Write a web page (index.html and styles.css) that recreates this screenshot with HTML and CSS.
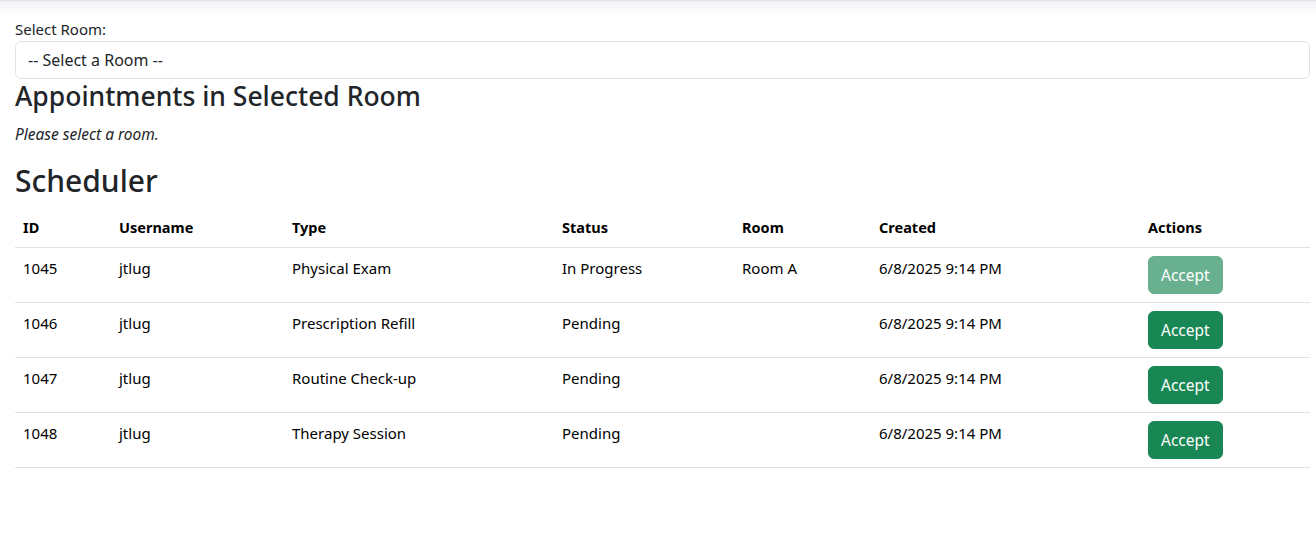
FILE: index.html
```html
<!DOCTYPE html>
<html lang="en">
<head>
<meta charset="utf-8">
<title>Scheduler</title>
<link rel="stylesheet" href="styles.css">
</head>
<body>
<div class="topbar"></div>
<main class="page">
  <label class="form-label" for="room">Select Room:</label>
  <div class="form-select" id="room">-- Select a Room --</div>
  <h3 class="h3">Appointments in Selected Room</h3>
  <p class="note">Please select a room.</p>
  <h2 class="h2">Scheduler</h2>
  <table class="table">
    <colgroup>
      <col class="c-id"><col class="c-user"><col class="c-type"><col class="c-status"><col class="c-room"><col class="c-created"><col class="c-actions">
    </colgroup>
    <thead>
      <tr><th>ID</th><th>Username</th><th>Type</th><th>Status</th><th>Room</th><th>Created</th><th>Actions</th></tr>
    </thead>
    <tbody>
      <tr><td>1045</td><td>jtlug</td><td>Physical Exam</td><td>In Progress</td><td>Room A</td><td>6/8/2025 9:14 PM</td><td><button class="btn disabled" disabled>Accept</button></td></tr>
      <tr><td>1046</td><td>jtlug</td><td>Prescription Refill</td><td>Pending</td><td></td><td>6/8/2025 9:14 PM</td><td><button class="btn">Accept</button></td></tr>
      <tr><td>1047</td><td>jtlug</td><td>Routine Check-up</td><td>Pending</td><td></td><td>6/8/2025 9:14 PM</td><td><button class="btn">Accept</button></td></tr>
      <tr><td>1048</td><td>jtlug</td><td>Therapy Session</td><td>Pending</td><td></td><td>6/8/2025 9:14 PM</td><td><button class="btn">Accept</button></td></tr>
    </tbody>
  </table>
</main>
</body>
</html>
```
FILE: styles.css
```css
* { box-sizing: border-box; }
html, body { margin: 0; padding: 0; }
body {
  font-family: "Noto Sans", "Open Sans", sans-serif;
  font-size: 15px;
  line-height: 24px;
  color: #212529;
  background: #fff;
}
.topbar {
  height: 17px;
  background: linear-gradient(to bottom, #dcdee3 0px, #f1f2f4 2px, #ffffff 16px);
}
.page {
  padding: 0 6px 0 15px;
}
.form-label {
  display: block;
  height: 24px;
}
.form-select {
  height: 38px;
  padding: 6px 12px;
  border: 1px solid #dee2e6;
  border-radius: 6px;
  color: #212529;
  font-size: 16px;
}
.h3 {
  font-size: 26.5px;
  font-weight: 500;
  line-height: 35px;
  margin: 0 0 8px;
}
.note {
  font-style: italic;
  font-size: 15.5px;
  margin: 0 0 16px;
}
.h2 {
  font-size: 30px;
  font-weight: 500;
  line-height: 38.4px;
  margin: 0 0 7px;
}
.table {
  width: 100%;
  border-collapse: collapse;
  table-layout: fixed;
  color: #000;
  font-size: 15px;
}
.c-id { width: 96px; }
.c-user { width: 173px; }
.c-type { width: 270px; }
.c-status { width: 180px; }
.c-room { width: 137px; }
.c-created { width: 269px; }
.c-actions { width: auto; }
.table th, .table td {
  text-align: left;
  vertical-align: top;
  padding: 8px;
  border-bottom: 1px solid #dee2e6;
}
.table th {
  font-weight: 700;
  font-size: 14.5px;
  vertical-align: bottom;
}
.btn {
  font-family: inherit;
  font-size: 15.5px;
  line-height: 24px;
  height: 38px;
  padding: 6px 12px;
  border: 1px solid #198754;
  border-radius: 6px;
  background: #198754;
  color: #fff;
  cursor: pointer;
}
.btn.disabled {
  opacity: 0.65;
  cursor: default;
}
```
